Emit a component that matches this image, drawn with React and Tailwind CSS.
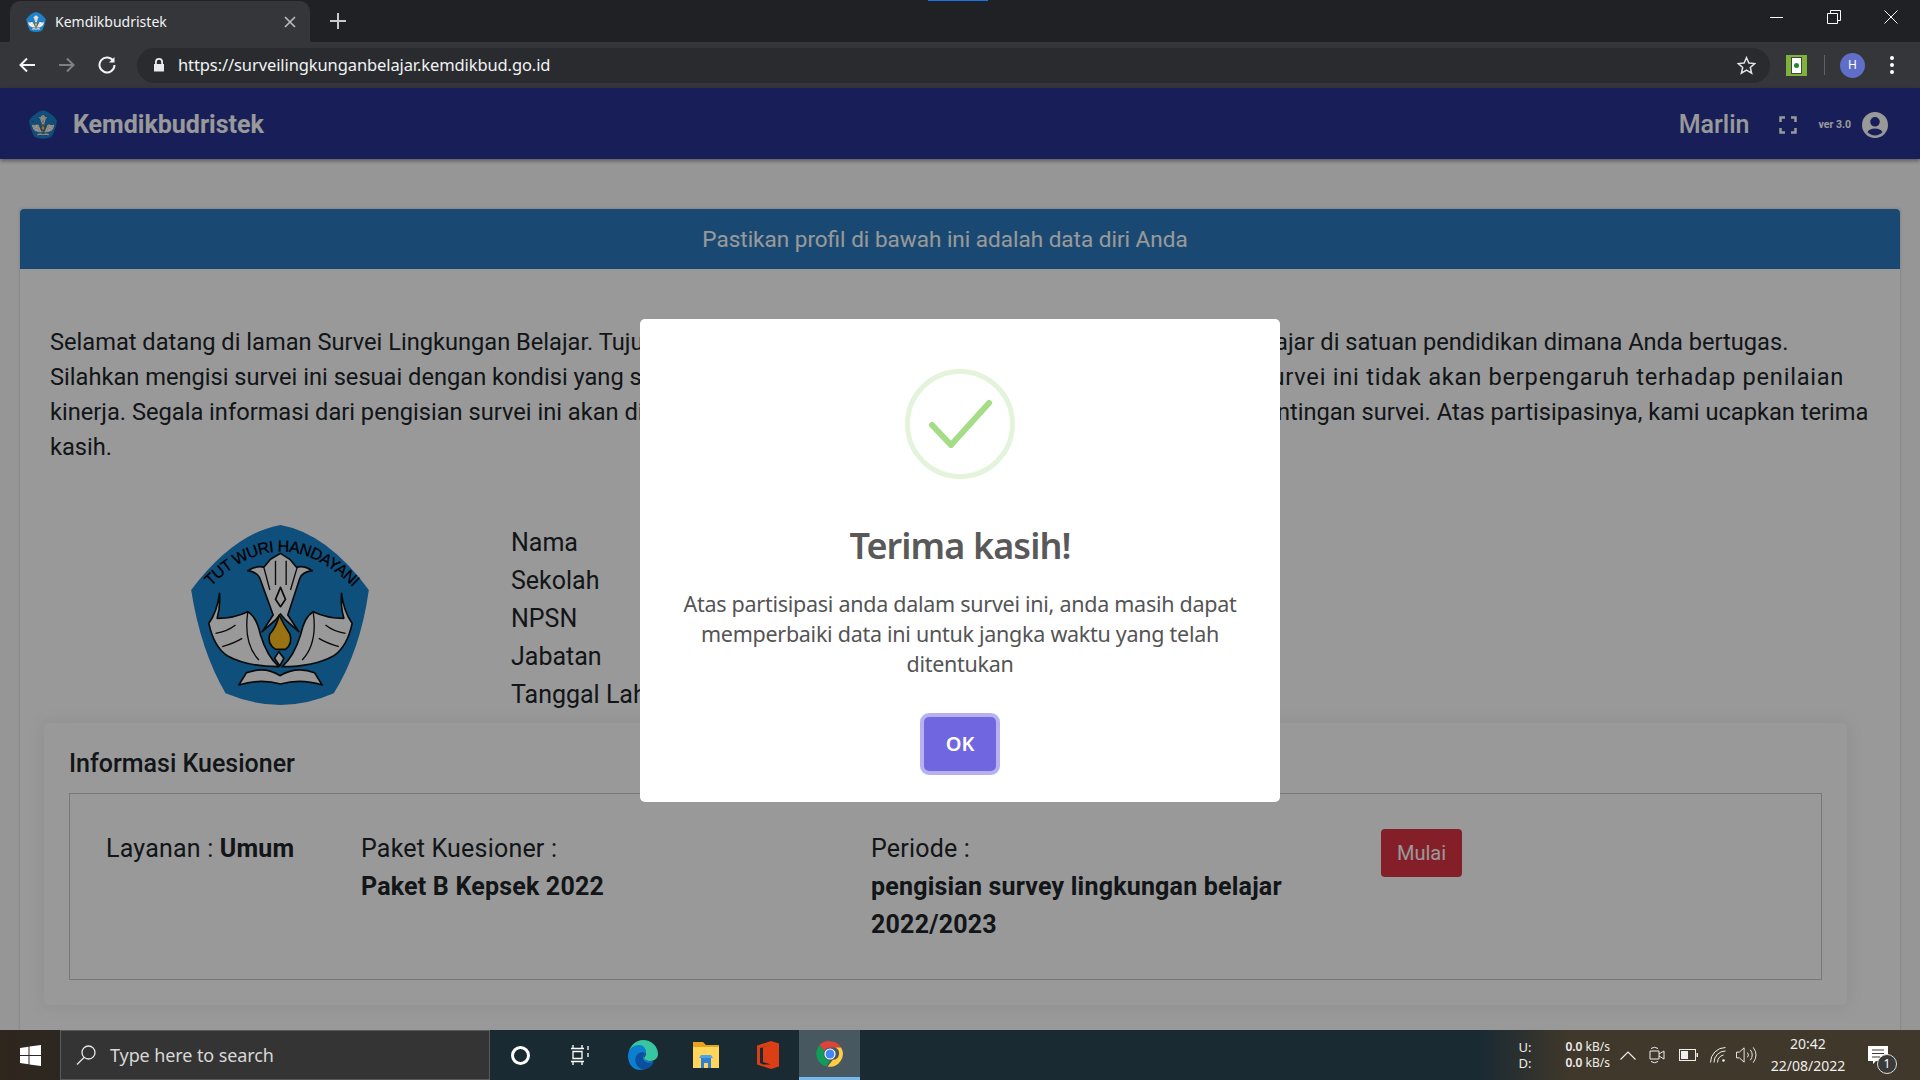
import React from "react";

const UI = "font-['Noto_Sans','Open_Sans',sans-serif]";

function Emblem({ className, withText = true }) {
  return (
    <svg viewBox="62 45 533 540" className={className}>
      <path d="M330 45 Q470 70 595 240 Q570 420 490 550 Q410 585 330 585 Q250 585 165 550 Q90 420 62 240 Q190 70 330 45Z" fill="#1a84cd" />
      {withText && (
        <>
          <path id="emblem-arc" d="M112 238 Q330 12 554 238" fill="none" />
          <text fontSize="48" fill="#000" stroke="#000" strokeWidth="0.8" fontFamily="'Liberation Sans',sans-serif">
            <textPath href="#emblem-arc" startOffset="12" textLength="490" lengthAdjust="spacing">TUT WURI HANDAYANI</textPath>
          </text>
        </>
      )}
      <g stroke="#111" strokeWidth="5" strokeLinejoin="round" fill="#fff">
        <path d="M147 250 Q140 305 115 340 Q130 410 170 437 Q230 470 325 470 Q290 440 270 375 Q258 320 232 305 Q190 325 140 325 Q150 290 147 250Z" />
        <path d="M513 250 Q520 305 545 340 Q530 410 490 437 Q430 470 335 470 Q370 440 390 375 Q402 320 428 305 Q470 325 520 325 Q510 290 513 250Z" />
        <path d="M232 182 Q262 165 280 172 L300 148 L330 130 L358 148 L378 172 Q400 165 425 182 Q395 186 388 205 L352 315 L385 365 L345 330 L330 312 L315 330 L275 365 L308 315 L268 205 Q260 186 232 182Z" />
        <path d="M330 232 L345 268 L330 290 L315 268Z" />
        <path d="M326 315 Q340 345 358 372 Q368 400 345 418 L315 418 Q288 400 298 372 Q318 350 326 315Z" fill="#ffc020" />
        <path d="M325 425 L340 445 L328 468 L312 445Z" />
        <path d="M205 525 L228 488 Q285 468 328 497 Q378 468 432 488 L455 525 Q390 505 330 522 Q270 505 205 525Z" />
      </g>
      <g stroke="#111" strokeWidth="4" fill="none">
        <path d="M280 172 L298 240 M315 152 L315 225 M347 152 L347 225 M380 172 L360 240" />
        <path d="M135 370 Q170 365 195 345 M155 410 Q190 400 215 385 M525 370 Q490 365 465 345 M505 410 Q470 400 445 385" />
        <path d="M232 305 Q218 400 265 450 M428 305 Q442 400 395 450" />
      </g>
    </svg>
  );
}

function Tab() {
  return (
    <div className="relative ml-[10px] mt-[1px] flex h-[41px] w-[300px] items-center rounded-t-[10px] bg-[#35363a] pl-[16px] pr-[14px]">
      <Emblem withText={false} className="h-[20px] w-[20px] shrink-0" />
      <span className={`ml-[9px] flex-1 text-[14px] text-[#f1f3f4] ${UI}`}>Kemdikbudristek</span>
      <svg viewBox="0 0 12 12" className="h-[12px] w-[12px]" stroke="#b8babd" strokeWidth="1.7"><path d="M1 1l10 10M11 1L1 11" /></svg>
    </div>
  );
}

function TopBar() {
  return (
    <div className="relative flex h-[42px] items-start bg-[#202124]">
      <div className="absolute left-[928px] top-0 h-[1px] w-[60px] bg-[#1a73e8]" />
      <Tab />
      <svg viewBox="0 0 16 16" className="ml-[20px] mt-[13px] h-[16px] w-[16px]" stroke="#c8cacc" strokeWidth="2"><path d="M8 0v16M0 8h16" /></svg>
      <div className="ml-auto flex h-[42px] items-start">
        <div className="flex h-[34px] w-[57px] items-center justify-center">
          <div className="h-[1px] w-[13px] bg-white" />
        </div>
        <div className="flex h-[34px] w-[57px] items-center justify-center">
          <svg viewBox="0 0 14 14" className="h-[14px] w-[14px]" fill="none" stroke="#fff"><path d="M.5 3.500h10v10H.5zM3.500 3V.5h10v10H11" /></svg>
        </div>
        <div className="flex h-[34px] w-[58px] items-center justify-center">
          <svg viewBox="0 0 14 14" className="h-[14px] w-[14px]" fill="none" stroke="#fff"><path d="M.5.5l13 13M13.500.5l-13 13" /></svg>
        </div>
      </div>
    </div>
  );
}

function Toolbar() {
  return (
    <div className="flex h-[46px] items-center bg-[#35363a]">
      <svg viewBox="0 0 18 18" className="ml-[18px] h-[18px] w-[18px]" fill="none" stroke="#f1f3f4" strokeWidth="2"><path d="M17 9H3M9 2.500L2.500 9 9 15.500" /></svg>
      <svg viewBox="0 0 18 18" className="ml-[22px] h-[18px] w-[18px]" fill="none" stroke="#7d7f82" strokeWidth="2"><path d="M1 9h14M9 2.500L15.500 9 9 15.500" /></svg>
      <svg viewBox="0 0 18 18" className="ml-[22px] h-[18px] w-[18px]" fill="none" stroke="#f1f3f4" strokeWidth="2"><path d="M15.500 5.200A7.500 7.500 0 1 0 16.500 9" /><path d="M16.500 1v5.500H11" fill="#f1f3f4" stroke="none" /></svg>
      <div className="ml-[21px] flex h-[35px] w-[1633px] items-center rounded-full bg-[#292b2e] pl-[16px] pr-[14px]">
        <svg viewBox="0 0 12 14" className="h-[14px] w-[12px]" fill="#e8eaed"><path d="M2 6V4a4 4 0 0 1 8 0v2h1v7.500H1V6zM3.800 6h4.400V4a2.200 2.200 0 0 0-4.400 0z" /></svg>
        <span className={`ml-[13px] flex-1 text-[16.5px] tracking-[-0.1px] text-[#f1f3f4] ${UI}`}>https://surveilingkunganbelajar.kemdikbud.go.id</span>
        <svg viewBox="0 0 20 20" className="h-[19px] w-[19px]" fill="none" stroke="#e0e2e4" strokeWidth="1.600"><path d="M10 1.800l2.500 5.600 6.100.6-4.600 4 1.400 6-5.400-3.200-5.400 3.200 1.400-6-4.600-4 6.100-.6z" /></svg>
      </div>
      <div className="ml-[16px] flex h-[21px] w-[21px] items-center justify-center bg-[#7fb23b]">
        <div className="flex h-[17px] w-[11px] items-center justify-center border border-[#444] bg-white">
          <div className="h-[5px] w-[5px] rounded-full bg-[#1d8a2c]" />
        </div>
      </div>
      <div className="ml-[17px] h-[20px] w-[1px] bg-[#5f6368]" />
      <div className={`ml-[15px] flex h-[25px] w-[25px] items-center justify-center rounded-full bg-[#5f6fc8] text-[12px] text-white ${UI}`}>H</div>
      <div className="ml-[25px] flex flex-col gap-[3px]">
        <div className="h-[4px] w-[4px] rounded-full bg-white" />
        <div className="h-[4px] w-[4px] rounded-full bg-white" />
        <div className="h-[4px] w-[4px] rounded-full bg-white" />
      </div>
    </div>
  );
}

function NavBar() {
  return (
    <div className="relative flex h-[71px] items-center bg-[#283593] pt-[2px] shadow-[0_2px_4px_rgba(0,0,0,0.4)]">
      <Emblem withText={false} className="ml-[29px] h-[29px] w-[28px]" />
      <span className="ml-[16px] text-[25px] font-bold text-white">Kemdikbudristek</span>
      <span className="ml-auto text-[25px] font-medium text-white">Marlin</span>
      <svg viewBox="0 0 18 18" className="ml-[29px] h-[18px] w-[18px]" fill="none" stroke="#fff" strokeWidth="2.500"><path d="M1.500 6V1.500H6M12 1.500h4.500V6M16.500 12v4.500H12M6 16.500H1.500V12" /></svg>
      <span className="ml-[22px] text-[10.5px] font-bold text-white">ver 3.0</span>
      <svg viewBox="0 0 26 26" className="ml-[11px] mr-[32px] h-[26px] w-[26px]" fill="#fff"><path fillRule="evenodd" d="M13 0a13 13 0 1 1 0 26 13 13 0 0 1 0-26zm0 5a4.800 4.800 0 1 0 0 9.600A4.800 4.800 0 0 0 13 5zm0 11.500c-3.500 0-6.500 1.300-7.500 3.500a10 10 0 0 0 15 0c-1-2.200-4-3.500-7.500-3.500z" /></svg>
    </div>
  );
}

function Profile() {
  return (
    <div className="mt-[60px] flex h-[198px]">
      <Emblem className="ml-[171px] h-[180px] w-[178px]" />
      <div className="ml-[142px] -mt-[1px] text-[25px] leading-[38px] text-[#212529]">
        <div>Nama</div>
        <div>Sekolah</div>
        <div>NPSN</div>
        <div>Jabatan</div>
        <div>Tanggal Lahir</div>
      </div>
    </div>
  );
}

function Kuesioner() {
  return (
    <div className="ml-[24px] mr-[53px] h-[282px] rounded-[5px] bg-white px-[25px] pt-[24px] shadow-[0_0_20px_rgba(0,0,0,0.08)]">
      <div className="h-[46px] text-[25px] font-medium leading-[34px] text-[#212529]">Informasi Kuesioner</div>
      <div className="flex h-[187px] border border-[#c9c9c9] pl-[36px] pt-[36px] text-[25px] leading-[38px] tracking-[0.2px] text-[#212529]">
        <div className="w-[255px] shrink-0">Layanan : <b className="font-bold">Umum</b></div>
        <div className="w-[510px] shrink-0 pr-[30px]">Paket Kuesioner :<br /><b className="font-bold">Paket B Kepsek 2022</b></div>
        <div className="w-[510px] shrink-0 pr-[30px]">Periode :<br /><b className="font-bold">pengisian survey lingkungan belajar 2022/2023</b></div>
        <div className="-mt-[1px] flex h-[48px] w-[81px] items-center justify-center rounded-[4px] bg-[#dc3545] text-[20px] tracking-normal text-white">Mulai</div>
      </div>
    </div>
  );
}

function Modal() {
  return (
    <div className="flex h-[483px] w-[640px] flex-col items-center rounded-[5px] bg-white pt-[50px]">
      <div className="flex h-[110px] w-[110px] items-center justify-center rounded-full border-[5px] border-[#e4f4db]">
        <svg viewBox="0 0 66 48" className="h-[48px] w-[66px]" fill="none" stroke="#a5dc86" strokeWidth="6" strokeLinecap="round"><path d="M5 25l19 20L62 3" /></svg>
      </div>
      <h2 className={`mt-[40px] text-[36px] font-semibold leading-[54px] text-[#595959] ${UI} tracking-[-0.9px]`}>Terima kasih!</h2>
      <p className={`mt-[16px] w-[580px] text-center text-[21.5px] leading-[30px] text-[#545454] ${UI} tracking-[-0.27px]`}>
        Atas partisipasi anda dalam survei ini, anda masih dapat memperbaiki data ini untuk jangka waktu yang telah ditentukan
      </p>
      <div className="mt-[38px] flex h-[54px] w-[72px] items-center justify-center rounded-[5px] bg-[#7066e0] text-[20px] font-semibold text-white shadow-[0_0_0_4px_rgba(112,102,224,0.5)]">
        <span className={UI}>OK</span>
      </div>
    </div>
  );
}

function Page() {
  return (
    <div className="flex-1 overflow-hidden bg-[#fbfbfb] px-[20px] pt-[50px]">
      <div className="h-[900px] bg-white shadow-[0_0_3px_rgba(0,0,0,0.2)]">
        <div className="flex h-[60px] items-center justify-center rounded-t-[4px] bg-[#2b7bc0] pr-[30px] pt-[2px] text-[22.5px] text-white">
          Pastikan profil di bawah ini adalah data diri Anda
        </div>
        <div className="px-[30px] pt-[56px] text-[23.65px] leading-[35px] text-[#212529]">
          <div className="whitespace-nowrap">Selamat datang di laman Survei Lingkungan Belajar. Tujuan <span className="[word-spacing:-1px]">survei ini adalah untuk mengetahui kondisi</span> lingkungan belajar di satuan pendidikan dimana Anda bertugas.</div>
          <div className="whitespace-nowrap">Silahkan mengisi survei ini sesuai dengan kondisi yang sebenarnya <span className="[word-spacing:-4.500px]">terjadi di satuan pendidikan Anda. Hasil pengisian</span> <span className="tracking-[0.75px]">survei ini tidak akan berpengaruh terhadap penilaian</span></div>
          <div className="whitespace-nowrap">kinerja. Segala informasi dari pengisian survei ini akan dijaga <span className="[word-spacing:2.500px]">kerahasiaannya dan hanya akan digunakan untuk</span> kepentingan survei. Atas partisipasinya, kami ucapkan terima</div>
          <div>kasih.</div>
        </div>
        <Profile />
        <Kuesioner />
      </div>
    </div>
  );
}

function ChromeLogo({ className }) {
  return (
    <svg viewBox="0 0 24 24" className={className}>
      <path d="M12 1a11 11 0 0 1 9.500 5.500H12a5.500 5.500 0 0 0-5 3.200L3 4.500A11 11 0 0 1 12 1z" fill="#db4437" />
      <path d="M3 4.500l4 5.200A5.500 5.500 0 0 0 12 17.500L8.800 22.500A11 11 0 0 1 3 4.500z" fill="#0f9d58" />
      <path d="M21.500 6.500A11 11 0 0 1 10 22.800l4.500-5.800a5.500 5.500 0 0 0 2-10.500z" fill="#ffcd40" />
      <circle cx="12" cy="12" r="4.800" fill="#fff" />
      <circle cx="12" cy="12" r="3.800" fill="#4285f4" />
    </svg>
  );
}

function TaskBar() {
  return (
    <div className={`flex h-[50px] items-stretch bg-[linear-gradient(90deg,#2f261e_0,#2c2720_60px,#1a2a33_490px,#1a2a33_1480px,#40382a_1570px,#40382a_100%)] text-white ${UI}`}>
      <div className="flex w-[60px] items-center justify-center">
        <svg viewBox="0 0 21 21" className="h-[21px] w-[21px]" fill="#fff"><path d="M0 3l8.500-1.200V10H0zM9.500 1.600L21 0v10H9.500zM0 11h8.500v8.200L0 18zM9.500 11H21v10L9.500 19.400z" /></svg>
      </div>
      <div className="flex w-[430px] items-center border border-[#5a5a5a] bg-[#343434] pl-[15px]">
        <svg viewBox="0 0 20 20" className="h-[20px] w-[20px]" fill="none" stroke="#e8e8e8" strokeWidth="1.300"><circle cx="12.500" cy="7.500" r="6.500" /><path d="M8 12.500L1 19.500" /></svg>
        <span className="ml-[14px] text-[18px] tracking-[-0.1px] text-[#d8d8d8]">Type here to search</span>
      </div>
      <div className="flex w-[60px] items-center justify-center">
        <div className="h-[19px] w-[19px] rounded-full border-[3px] border-white" />
      </div>
      <div className="flex w-[61px] items-center justify-center">
        <svg viewBox="0 0 22 20" className="h-[20px] w-[22px]" fill="none" stroke="#fff" strokeWidth="1.300"><path d="M1 3.500h13M1 16.500h13M3 0v3M12 0v3M3 17v3M12 17v3M3 6.500h9v7H3zM18 1v4M18 8v4" /></svg>
      </div>
      <div className="flex w-[64px] items-center justify-center">
        <svg viewBox="0 0 30 30" className="h-[30px] w-[30px]">
          <path d="M15 0C23 0 30 6 30 14c0 4-3 7-8 7-3 0-6-1-6-3 0-1 2-2 2-5 0-4-4-7-8-7-4 0-7 2-9 5C3 5 8 0 15 0z" fill="#37c6a0" />
          <path d="M1 11c2-4 6-6 10-6 4 0 7 3 7 7 0 2-2 3-2 5 0 3 4 5 9 4-2 5-6 9-13 9C5 30 0 24 0 16c0-2 .4-3.500 1-5z" fill="#0c7fd0" />
          <path d="M10 14c-4 3-4 11 3 15 5 1 10-1 13-7-5 2-11 0-11-4 0-2 1-3 2-5-2-1-5-1-7 1z" fill="#0b4f9e" />
        </svg>
      </div>
      <div className="flex w-[62px] items-center justify-center">
        <svg viewBox="0 0 28 28" className="h-[28px] w-[28px]">
          <path d="M1 1h10l3 3h13v6H1z" fill="#e6a41e" />
          <path d="M1 6h26v21H1z" fill="#ffd55c" />
          <path d="M9 17h10v10h-3v-5h-4v5H9z" fill="#2f7fd3" />
          <path d="M7 17h14l-2-3H9z" fill="#4ba3ea" />
        </svg>
      </div>
      <div className="flex w-[62px] items-center justify-center">
        <svg viewBox="0 0 22 28" className="h-[28px] w-[22px]" fill="#dc3e15"><path fillRule="evenodd" d="M0 4.500L14 0l8 2.500v23L14 28 0 23.500zM14 4L6 6v15l8 2.500H6L3 22V7z" /></svg>
      </div>
      <div className="flex w-[61px] items-center justify-center border-b-[3px] border-[#76b9ed] bg-[#485860]">
        <ChromeLogo className="h-[28px] w-[28px]" />
      </div>
      <div className="flex-1" />
      <div className="flex flex-col justify-center text-[13px] leading-[16px] text-[#eee]">
        <div>U:</div>
        <div>D:</div>
      </div>
      <div className="ml-[34px] flex flex-col items-end justify-center text-[12px] leading-[16px] text-[#eee]">
        <div><b className="font-semibold">0.0</b> kB/s</div>
        <div><b className="font-semibold">0.0</b> kB/s</div>
      </div>
      <div className="flex items-center">
        <svg viewBox="0 0 16 9" className="ml-[10px] h-[9px] w-[16px]" fill="none" stroke="#eee" strokeWidth="1.200"><path d="M.5 8.500L8 1l7.500 7.500" /></svg>
        <svg viewBox="0 0 16 18" className="ml-[13px] h-[18px] w-[16px]" fill="none" stroke="#eee" strokeWidth="1"><path d="M1 5h9v8H1zM10 8l5-3v8l-5-3M2 2.500Q5.500 0 9 2.500M2 15.500Q5.500 18 9 15.500" /></svg>
        <svg viewBox="0 0 19 12" className="ml-[14px] h-[12px] w-[19px]" fill="#eee"><path fillRule="evenodd" d="M0 0h17v12H0zM1 1v10h15V1z" /><path d="M2 2h7v8H2zM17.500 4H19v4h-1.500z" /></svg>
        <svg viewBox="0 0 16 16" className="ml-[12px] h-[16px] w-[16px]" fill="none" stroke="#eee"><path d="M.5 15.500A15 15 0 0 1 15.500.5M4 15.500A11.500 11.500 0 0 1 15.500 4M7.500 15.500a8 8 0 0 1 6-7.500" /><circle cx="13.500" cy="13.500" r="1.300" fill="#eee" stroke="none" /></svg>
        <svg viewBox="0 0 22 18" className="ml-[10px] h-[18px] w-[21px]" fill="none" stroke="#eee"><path d="M.5 6h3L8.500 1.500v15L3.500 12h-3zM12 6.500q2 2.500 0 5M15 3.500q4 5.500 0 11M18 1q6 8 0 16" /></svg>
      </div>
      <div className="ml-[11px] flex w-[80px] flex-col items-center justify-center text-[14px] leading-[22px] text-[#eee]">
        <div>20:42</div>
        <div>22/08/2022</div>
      </div>
      <div className="relative ml-[20px] mr-[22px] flex w-[30px] items-center">
        <svg viewBox="0 0 20 18" className="h-[18px] w-[20px]" fill="#fff"><path d="M0 0h20v15h-12l-3 3v-3H0z" /><path d="M4 4h12M4 7.500h12M4 11h8" stroke="#40382a" strokeWidth="1" /></svg>
        <div className="absolute left-[9px] top-[24px] flex h-[20px] w-[20px] items-center justify-center rounded-full border border-[#ddd] bg-[#3a3a3a] text-[12px] leading-none">1</div>
      </div>
    </div>
  );
}

export default function App() {
  return (
    <div className="flex h-screen w-screen flex-col overflow-hidden">
      <TopBar />
      <Toolbar />
      <div className="relative flex min-h-0 flex-1 flex-col font-['Roboto',sans-serif]">
        <NavBar />
        <Page />
        <div className="absolute inset-0 flex items-center justify-center bg-black/40 pt-[2px]">
          <Modal />
        </div>
      </div>
      <TaskBar />
    </div>
  );
}
